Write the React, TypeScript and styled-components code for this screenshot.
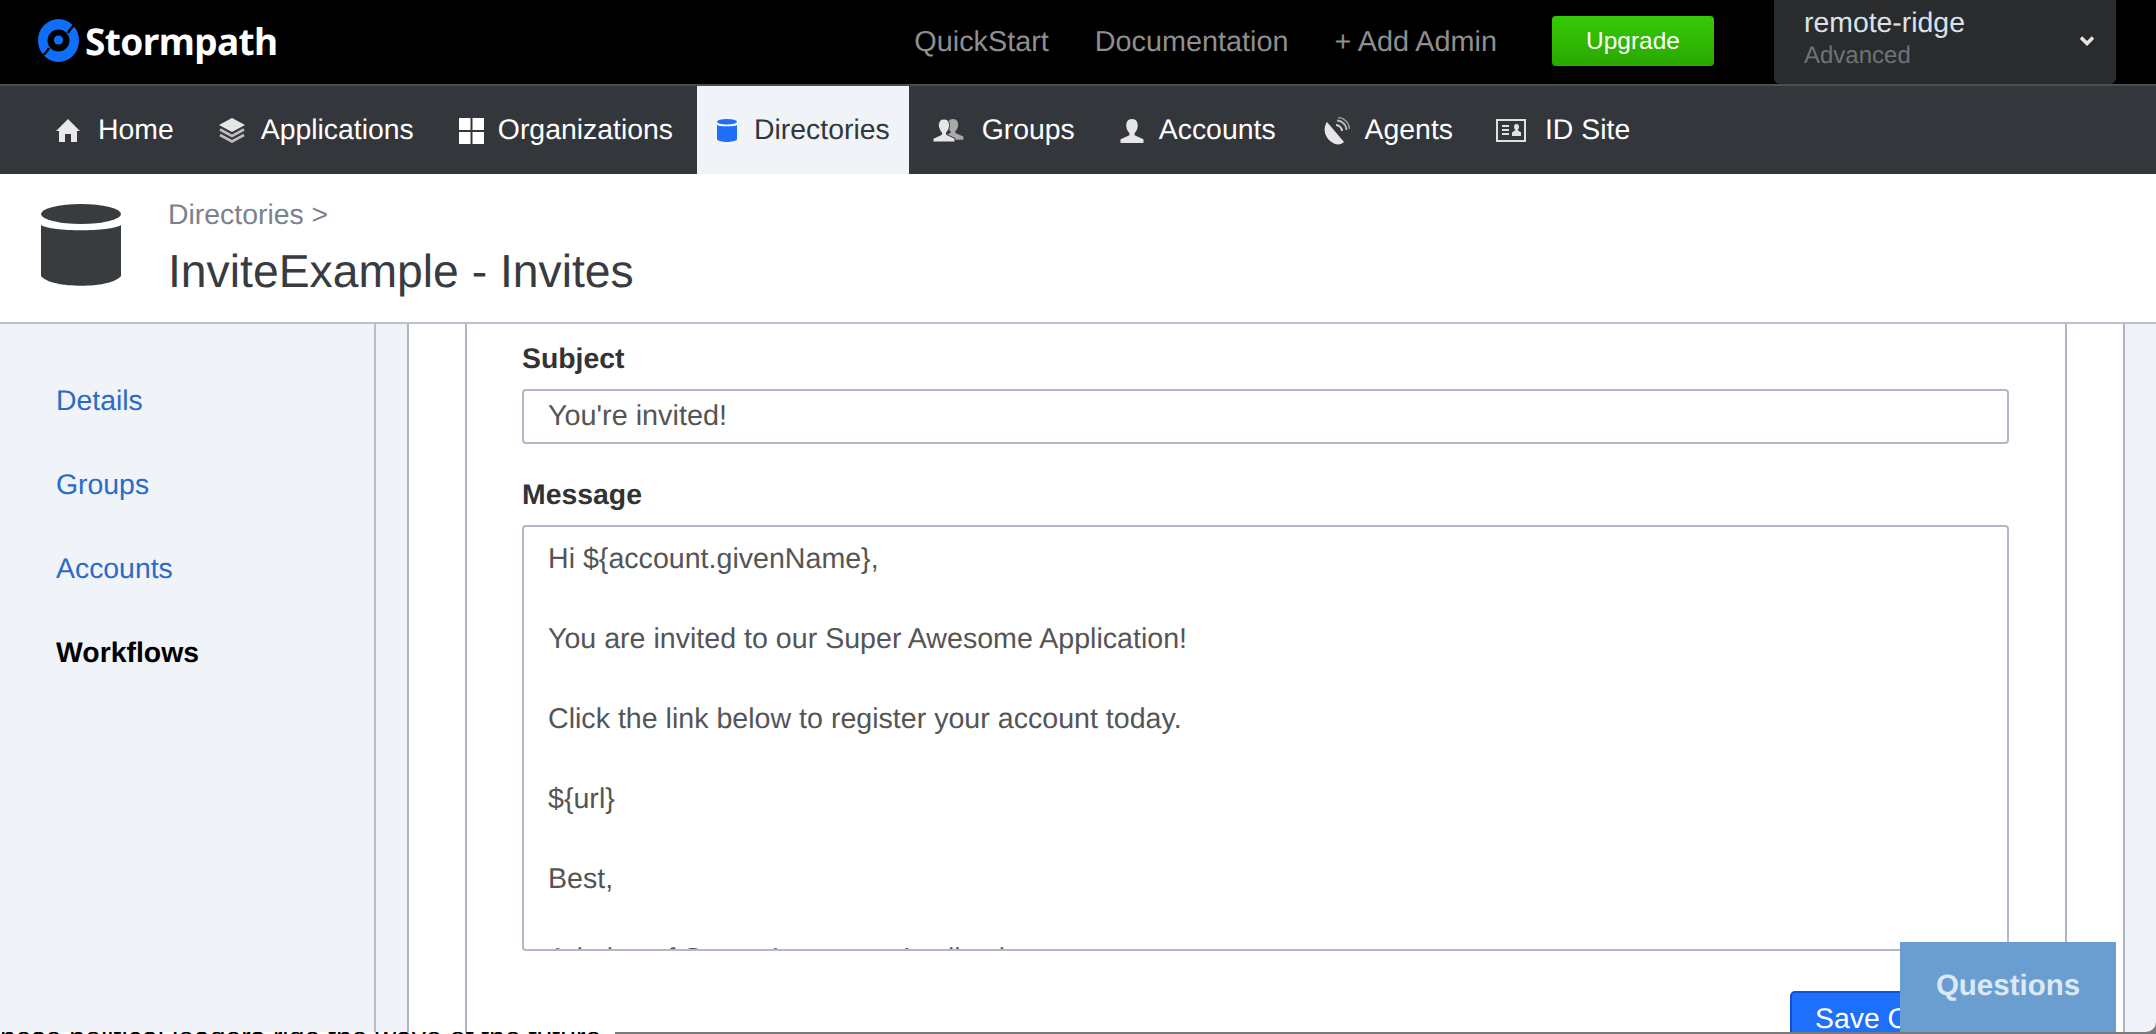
import styled, { createGlobalStyle } from 'styled-components';

const GlobalStyle = createGlobalStyle`
  html, body {
    margin: 0;
    padding: 0;
    overflow: hidden;
    background: #7b7b7b;
  }
  * {
    box-sizing: border-box;
  }
`;

const Page = styled.div`
  position: relative;
  width: 2156px;
  height: 1034px;
  display: flex;
  flex-direction: column;
  overflow: hidden;
  font-family: 'Liberation Sans', Arial, sans-serif;
  font-size: 28.4px;
  text-rendering: geometricPrecision;
  background: #7b7b7b;
`;

const TopBar = styled.header`
  height: 86px;
  flex: none;
  display: flex;
  align-items: flex-start;
  background: #000;
  border-bottom: 2px solid #4b4d51;
`;

const Brand = styled.div`
  display: flex;
  align-items: center;
  gap: 6px;
  margin: 19px 0 0 38px;
  height: 43px;
`;

const BrandName = styled.span`
  font-family: 'Noto Sans', sans-serif;
  font-weight: 700;
  font-size: 37px;
  line-height: 43px;
  letter-spacing: -0.6px;
  color: #fff;
`;

const TopLinks = styled.nav`
  display: flex;
  gap: 46px;
  margin: 22px 0 0 auto;
  font-size: 28.8px;
`;

const TopLink = styled.a`
  color: #8f8f8f;
  line-height: 40px;
`;

const UpgradeButton = styled.button`
  width: 162px;
  height: 50px;
  margin: 16px 60px 0 55px;
  padding: 0;
  border: none;
  border-radius: 4px;
  background: linear-gradient(#36c907, #2aa800);
  color: #fff;
  font: 24.5px 'Liberation Sans', Arial, sans-serif;
`;

const AccountBox = styled.div`
  width: 342px;
  height: 84px;
  margin-right: 40px;
  padding: 0 22px 2px 30px;
  display: flex;
  align-items: center;
  justify-content: space-between;
  background: #2a2b2d;
  border-radius: 0 0 6px 6px;
`;

const AccountName = styled.div`
  color: #dde1e8;
  line-height: 32px;
  margin-top: -4px;
`;

const AccountPlan = styled.div`
  color: #6e737a;
  font-size: 24px;
  line-height: 32px;
  margin-top: 1px;
`;

const MainNav = styled.nav`
  height: 88px;
  flex: none;
  display: flex;
  padding-left: 36px;
  background: #33363b;
`;

const NavItem = styled.a<{ $active?: boolean; $gap?: number; $tail?: number }>`
  display: flex;
  align-items: center;
  gap: ${(props) => props.$gap ?? 18}px;
  padding: 1px ${(props) => props.$tail ?? 25}px 0 20px;
  margin-right: ${(props) => (props.$active ? 4 : 0)}px;
  line-height: 87px;
  color: ${(props) => (props.$active ? '#33363b' : '#fff')};
  background: ${(props) => (props.$active ? '#f0f3f8' : 'transparent')};
`;

const PageHeader = styled.div`
  height: 150px;
  flex: none;
  display: flex;
  align-items: flex-start;
  gap: 47px;
  padding: 30px 0 0 41px;
  background: #fff;
  border-bottom: 2px solid #bcc0cf;
`;

const Crumb = styled.div`
  color: #7c818b;
  line-height: 40px;
  margin-top: -9px;
`;

const Title = styled.h1`
  margin: 8px 0 0;
  font-size: 46.3px;
  font-weight: 400;
  line-height: 56px;
  color: #383b40;
`;

const Workspace = styled.div`
  flex: 1;
  min-height: 0;
  display: flex;
  overflow: hidden;
  background: #f0f3f8;
  border-bottom-right-radius: 10px;
`;

const Sidebar = styled.aside`
  width: 376px;
  flex: none;
  padding-top: 35px;
  border-right: 2px solid #b9bdcb;
`;

const SideLink = styled.a<{ $current?: boolean }>`
  display: block;
  height: 84px;
  padding-left: 56px;
  line-height: 84px;
  color: ${(props) => (props.$current ? '#000' : '#2a6ac8')};
  font-weight: ${(props) => (props.$current ? 700 : 400)};
`;

const Panel = styled.section`
  width: 1718px;
  margin-left: 31px;
  flex: none;
  padding: 0 56px;
  background: #fff;
  border-left: 2px solid #b0b4c2;
  border-right: 2px solid #b0b4c2;
`;

const Card = styled.div`
  height: 100%;
  padding: 15px 56px 0 55px;
  border-left: 2px solid #b0b4c2;
  border-right: 2px solid #b0b4c2;
`;

const FieldLabel = styled.label`
  display: block;
  height: 40px;
  margin-bottom: 10px;
  line-height: 40px;
  font-weight: 700;
  color: #333;
`;

const TextInput = styled.input`
  display: block;
  width: 100%;
  height: 55px;
  margin-bottom: 31px;
  padding: 0 24px;
  border: 2px solid #b3b8c8;
  border-radius: 4px;
  color: #555;
  font: 28.8px 'Liberation Sans', Arial, sans-serif;
  text-rendering: geometricPrecision;
  outline: none;
`;

const MessageArea = styled.textarea`
  display: block;
  width: 100%;
  height: 426px;
  padding: 12px 24px;
  border: 2px solid #b3b8c8;
  border-radius: 4px;
  color: #555;
  font: 28.6px/40px 'Liberation Sans', Arial, sans-serif;
  text-rendering: geometricPrecision;
  overflow: hidden;
  resize: none;
  outline: none;
`;

const Actions = styled.div`
  display: flex;
  justify-content: flex-end;
  margin-top: 40px;
`;

const SaveButton = styled.button`
  width: 219px;
  height: 56px;
  padding: 0 0 0 23px;
  border: 2px solid #0e52d6;
  border-radius: 5px;
  background: #1e6ffb;
  color: #fff;
  text-align: left;
  white-space: nowrap;
  font: 28.4px 'Liberation Sans', Arial, sans-serif;
  text-rendering: geometricPrecision;
`;

const QuestionsTab = styled.div`
  position: absolute;
  left: 1900px;
  top: 942px;
  width: 216px;
  height: 90px;
  display: flex;
  align-items: center;
  justify-content: center;
  padding-bottom: 2px;
  background: #6a9ed0;
  color: #dce9f4;
  font-weight: 700;
  font-size: 29.5px;
`;

const BottomPeek = styled.div`
  height: 2px;
  flex: none;
  display: flex;
  overflow: hidden;
`;

const PeekText = styled.div`
  width: 615px;
  height: 2px;
  flex: none;
  background: #fff;
  color: #000;
  line-height: 12px;
  text-indent: -8px;
  white-space: nowrap;
  overflow: hidden;
`;

function StormLogo() {
  return (
    <svg width="41" height="43" viewBox="0 0 41 43">
      <ellipse cx="20.5" cy="21.5" rx="20.5" ry="21.5" fill="#0f6ffa" />
      <circle cx="20.5" cy="21.5" r="11" fill="#000" />
      <circle cx="20.5" cy="21" r="4.6" fill="#0f6ffa" />
      <path d="M30 14 Q33 8 40 3" stroke="#000" strokeWidth="2.4" fill="none" />
      <path d="M11 29 Q8 35 1 39" stroke="#000" strokeWidth="2.4" fill="none" />
    </svg>
  );
}

function ChevronIcon() {
  return (
    <svg width="14" height="11" viewBox="0 0 14 11">
      <path d="M1 1.5 L7 7.5 L13 1.5" stroke="#e6e6e6" strokeWidth="3.6" fill="none" />
    </svg>
  );
}

function HomeIcon() {
  return (
    <svg width="24" height="23" viewBox="0 0 24 23">
      <path d="M12 0 L24 12 L21 12 L21 23 L15 23 L15 15 L9 15 L9 23 L3 23 L3 12 L0 12 Z" fill="#e9e9e9" />
    </svg>
  );
}

function StackIcon() {
  return (
    <svg width="26" height="25" viewBox="0 0 26 25">
      <path d="M13 0 L26 7 L13 14 L0 7 Z" fill="#e6e6e6" />
      <path d="M1 11.5 L13 18 L25 11.5" stroke="#bdbdbd" strokeWidth="2.6" fill="none" />
      <path d="M1 17 L13 23.5 L25 17" stroke="#bdbdbd" strokeWidth="2.6" fill="none" />
    </svg>
  );
}

function GridIcon() {
  return (
    <svg width="25" height="26" viewBox="0 0 25 26">
      <rect x="0" y="0" width="11.5" height="12" fill="#fff" />
      <rect x="13.5" y="0" width="11.5" height="12" fill="#fff" />
      <rect x="0" y="14" width="11.5" height="12" fill="#fff" />
      <rect x="13.5" y="14" width="11.5" height="12" fill="#fff" />
    </svg>
  );
}

function CylinderIcon({ width, height, color }: { width: number; height: number; color: string }) {
  return (
    <svg width={width} height={height} viewBox="0 0 80 82" preserveAspectRatio="none">
      <ellipse cx="40" cy="10" rx="40" ry="10" fill={color} />
      <path d="M0 21 C10 28 70 28 80 21 L80 72 C70 85 10 85 0 72 Z" fill={color} />
    </svg>
  );
}

const personPath =
  'M11 0 C6.5 0 5.5 3.5 5.5 6.5 C5.5 9.5 7 12 8.5 13.5 L8.5 15.5 L0 19.5 L0 23 L22 23 L22 19.5 L13.5 15.5 L13.5 13.5 C15 12 16.5 9.5 16.5 6.5 C16.5 3.5 15.5 0 11 0 Z';

function GroupIcon() {
  return (
    <svg width="31" height="23" viewBox="0 0 31 23">
      <path d={personPath} transform="translate(9.5 0) scale(0.95 0.9)" fill="#a9a9a9" />
      <path d={personPath} stroke="#33363b" strokeWidth="1" fill="#e6e6e6" />
    </svg>
  );
}

function PersonIcon() {
  return (
    <svg width="24" height="24" viewBox="0 0 22 23">
      <path d={personPath} fill="#e6e6e6" />
    </svg>
  );
}

function DishIcon() {
  return (
    <svg width="26" height="28" viewBox="0 0 26 28">
      <path d="M3 5 C-2 12 1 23 11 27 C15 28 18 27 20 25 Z" fill="#e6e6e6" />
      <path d="M12 8 C15 8 18 11 18 14" stroke="#d0d0d0" strokeWidth="2" fill="none" />
      <path d="M13 3.5 C18 3.5 22.5 8 22.5 13" stroke="#bbb" strokeWidth="2" fill="none" />
      <path d="M14 0.5 C20 0.5 25.5 6 25.5 12" stroke="#999" strokeWidth="1.5" fill="none" />
    </svg>
  );
}

function IdCardIcon() {
  return (
    <svg width="30" height="23" viewBox="0 0 30 23">
      <rect x="1" y="1" width="28" height="21" fill="none" stroke="#e0e0e0" strokeWidth="2" />
      <path d="M6 7 H13 M6 11 H13 M6 15 H13" stroke="#e0e0e0" strokeWidth="2" />
      <path d="M20.5 5 C18.5 5 18 6.5 18 8 C18 9.5 18.8 10.5 19.5 11 L16 13.5 L16 17 L25 17 L25 13.5 L21.5 11 C22.2 10.5 23 9.5 23 8 C23 6.5 22.5 5 20.5 5 Z" fill="#e0e0e0" />
    </svg>
  );
}

const message = `Hi \${account.givenName},

You are invited to our Super Awesome Application!

Click the link below to register your account today.

\${url}

Best,

Admins of Super Awesome Application`;

function App() {
  return (
    <Page>
      <GlobalStyle />
      <TopBar>
        <Brand>
          <StormLogo />
          <BrandName>Stormpath</BrandName>
        </Brand>
        <TopLinks>
          <TopLink>QuickStart</TopLink>
          <TopLink>Documentation</TopLink>
          <TopLink>+ Add Admin</TopLink>
        </TopLinks>
        <UpgradeButton>Upgrade</UpgradeButton>
        <AccountBox>
          <div>
            <AccountName>remote-ridge</AccountName>
            <AccountPlan>Advanced</AccountPlan>
          </div>
          <ChevronIcon />
        </AccountBox>
      </TopBar>
      <MainNav>
        <NavItem><HomeIcon />Home</NavItem>
        <NavItem $gap={16}><StackIcon />Applications</NavItem>
        <NavItem $gap={14} $tail={24}><GridIcon />Organizations</NavItem>
        <NavItem $active $gap={17} $tail={19}><CylinderIcon width={20} height={23} color="#1f6ef5" />Directories</NavItem>
        <NavItem><GroupIcon />Groups</NavItem>
        <NavItem $gap={15} $tail={28}><PersonIcon />Accounts</NavItem>
        <NavItem $gap={15} $tail={23}><DishIcon />Agents</NavItem>
        <NavItem $gap={19}><IdCardIcon />ID Site</NavItem>
      </MainNav>
      <PageHeader>
        <CylinderIcon width={80} height={82} color="#383c3e" />
        <div>
          <Crumb>Directories &gt;</Crumb>
          <Title>InviteExample - Invites</Title>
        </div>
      </PageHeader>
      <Workspace>
        <Sidebar>
          <SideLink>Details</SideLink>
          <SideLink>Groups</SideLink>
          <SideLink>Accounts</SideLink>
          <SideLink $current>Workflows</SideLink>
        </Sidebar>
        <Panel>
          <Card>
            <FieldLabel>Subject</FieldLabel>
            <TextInput readOnly value="You're invited!" />
            <FieldLabel>Message</FieldLabel>
            <MessageArea readOnly value={message} />
            <Actions>
              <SaveButton>Save Changes</SaveButton>
            </Actions>
          </Card>
        </Panel>
      </Workspace>
      <BottomPeek>
        <PeekText>these political leaders ride the wave of the future.</PeekText>
      </BottomPeek>
      <QuestionsTab>Questions</QuestionsTab>
    </Page>
  );
}

export default App;
